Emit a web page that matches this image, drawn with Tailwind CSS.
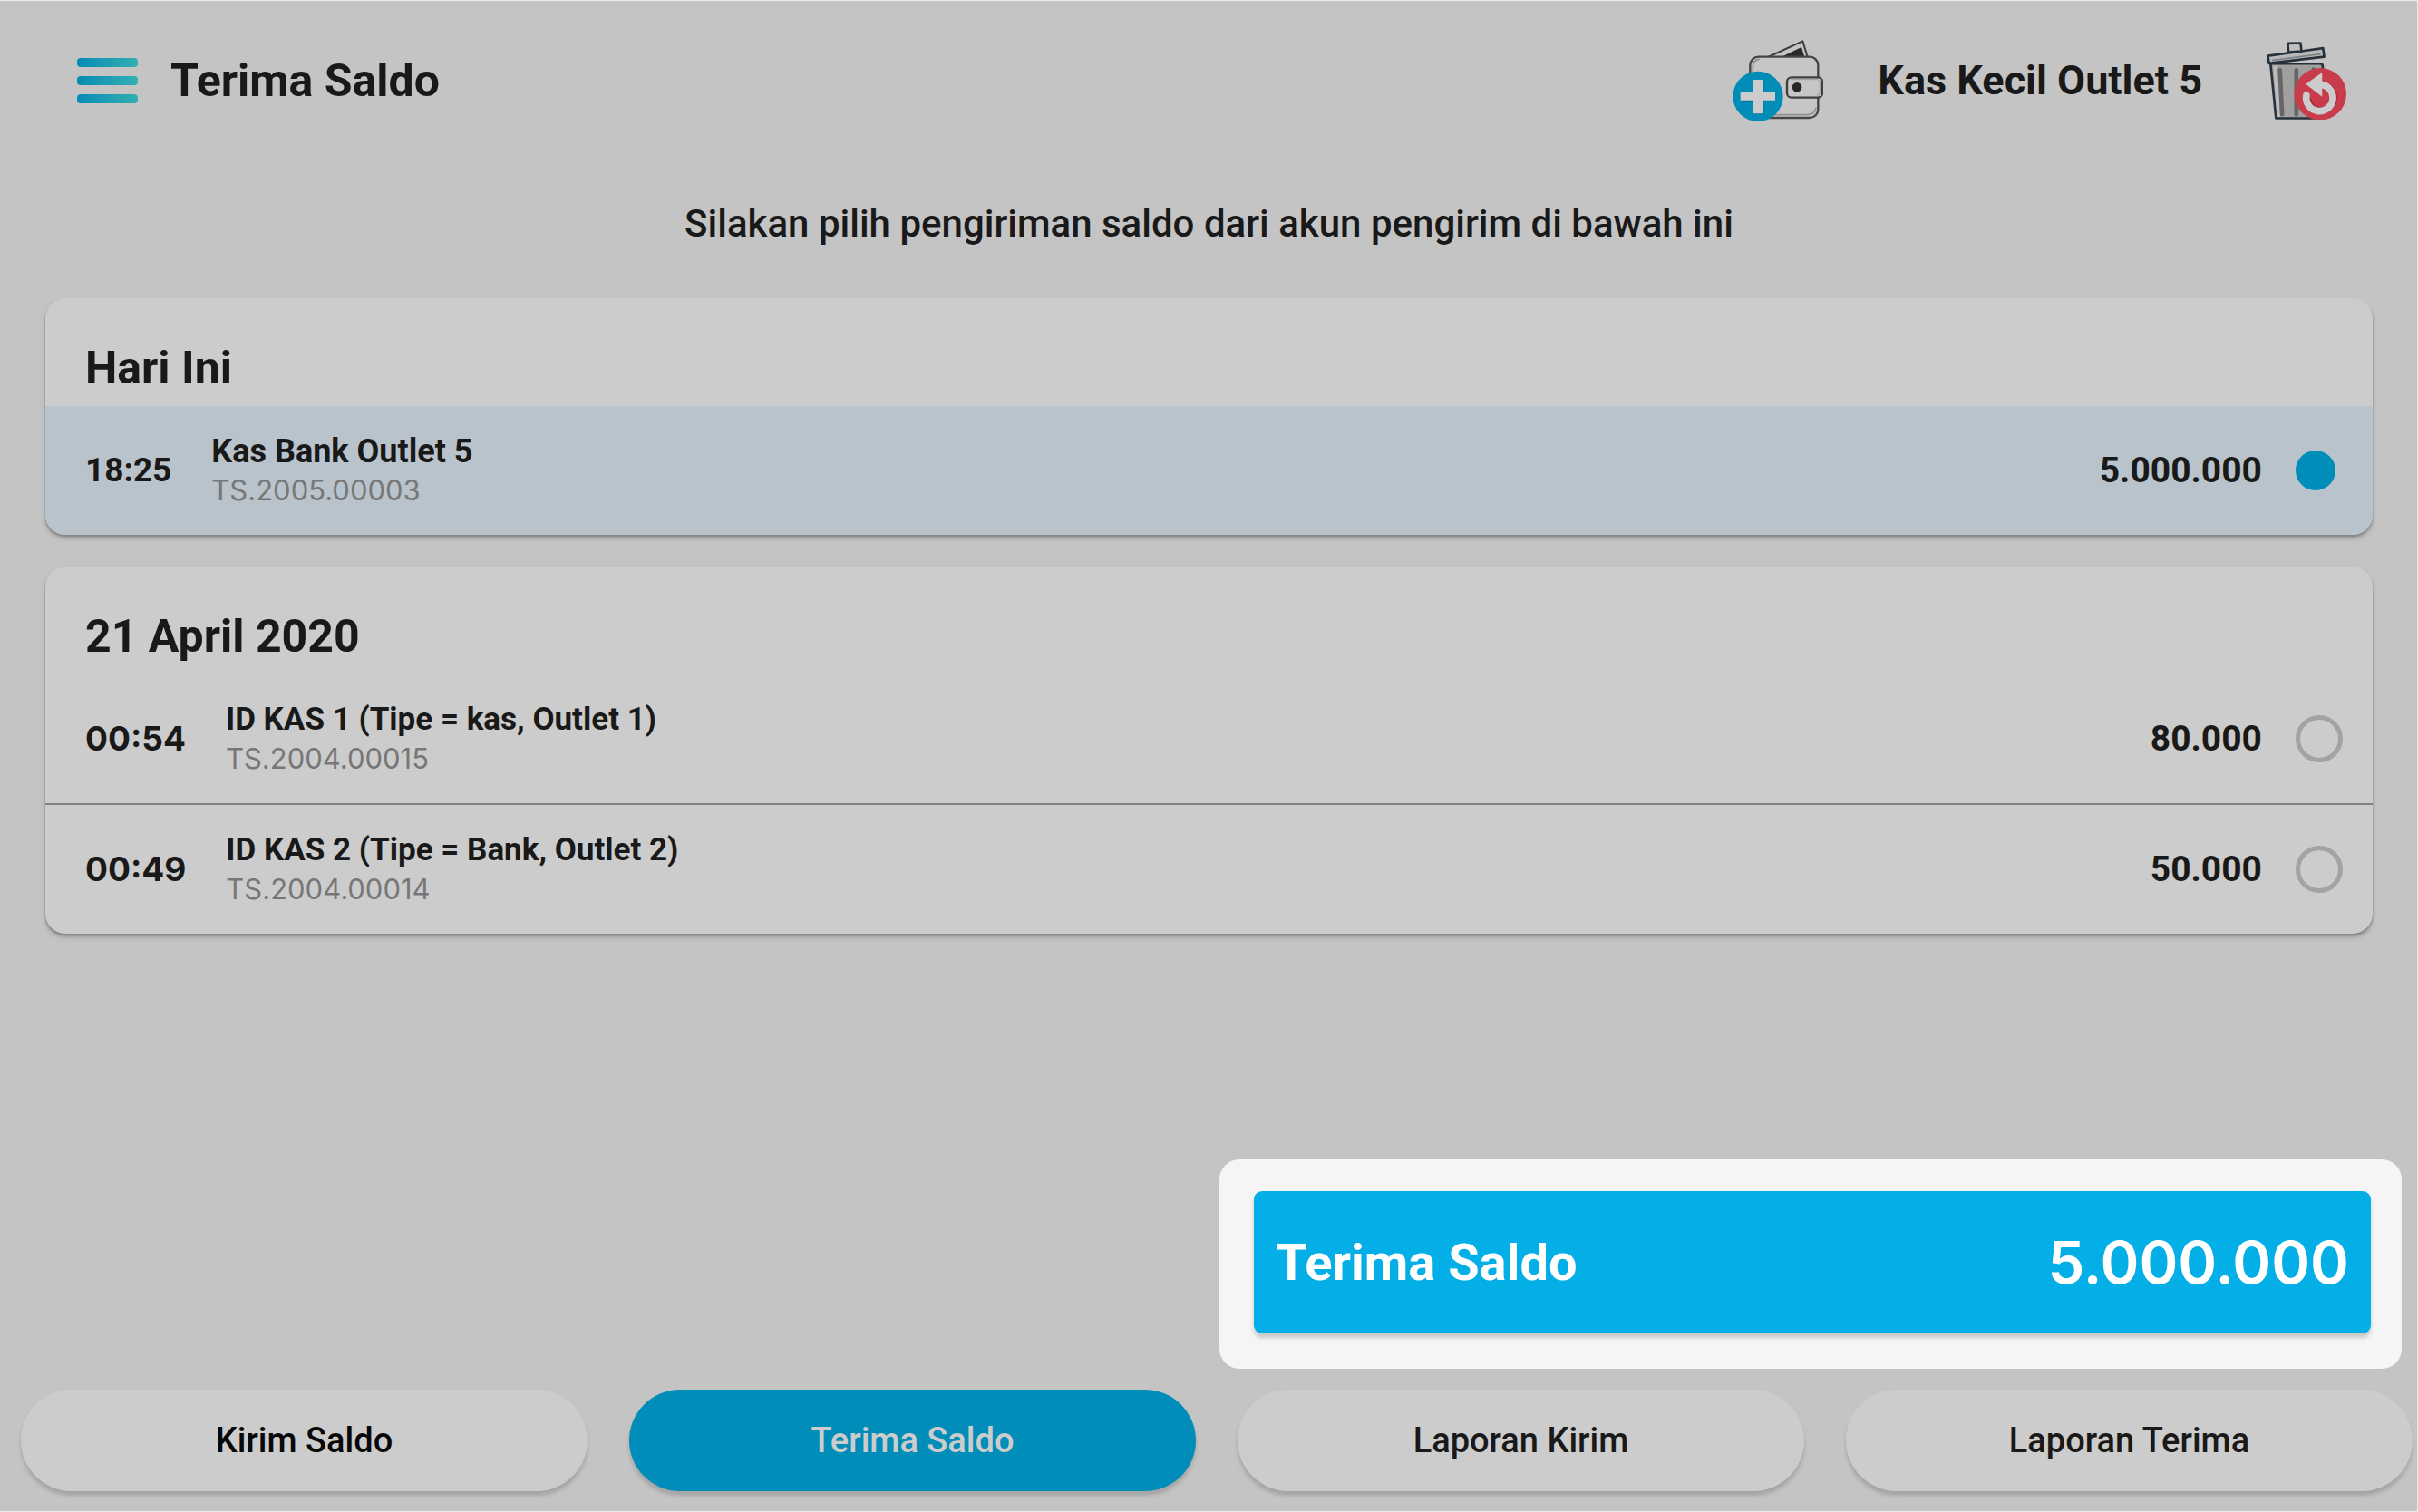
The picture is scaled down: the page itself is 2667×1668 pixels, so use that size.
<!DOCTYPE html>
<html lang="id">
<head>
  <meta charset="UTF-8" />
  <title>Terima Saldo</title>
  <meta name="viewport" content="width=device-width, initial-scale=1" />
  <script src="https://cdn.jsdelivr.net/npm/@tailwindcss/browser@4"></script>
</head>
<body class="min-h-screen flex flex-col bg-[#c4c4c4] border-y border-r border-[#ebebeb] font-['Roboto',sans-serif] text-[#191919]">

  <header class="flex items-center pl-[85px] pr-[78px] py-[43px]">
    <button aria-label="Menu" class="flex flex-col gap-[10px] mr-9">
      <span class="w-[67px] h-[10px] rounded bg-linear-to-r from-[#048bb3] to-[#32afb0]"></span>
      <span class="w-[67px] h-[10px] rounded bg-linear-to-r from-[#048bb3] to-[#32afb0]"></span>
      <span class="w-[67px] h-[10px] rounded bg-linear-to-r from-[#048bb3] to-[#32afb0]"></span>
    </button>
    <h1 class="text-[50px] leading-[60px] font-bold">Terima Saldo</h1>

    <button aria-label="Tambah kas" class="ml-auto mr-[60px]">
      <svg class="w-[100px] h-[90px]" viewBox="98 70 300 270" fill="none" stroke-linejoin="round">
        <path d="M215 127 330 74 346 127" stroke="#3c3c3c" stroke-width="6" />
        <path d="M258 127 326 94 336 127Z" fill="#2b2b2b" />
        <rect x="156" y="126" width="225" height="202" rx="28" fill="#c6c6c6" stroke="#454545" stroke-width="7" />
        <path d="M165 316V160q0-24 22-26M230 318h115q26-2 29-24" stroke="#8f8f8f" stroke-width="5" />
        <rect x="278" y="194" width="117" height="67" rx="15" fill="#c6c6c6" stroke="#3f3f3f" stroke-width="7" />
        <path d="M291 201h86q10 0 10 10v33q0 10-10 10" stroke="#999" stroke-width="3" />
        <circle cx="311" cy="227" r="16" fill="#262626" />
        <circle cx="182" cy="257" r="83" fill="#028db9" />
        <path d="M171 205h31v112h-31v-41h-42v-28h42z" fill="#0477a0" />
        <path d="M166 202h31v39h42v29h-42v44h-31v-44h-42v-29h42z" fill="#ccc" />
      </svg>
    </button>
    <p class="text-[45px] leading-[60px] font-bold">Kas Kecil Outlet 5</p>
    <button aria-label="Kosongkan" class="ml-[71px]">
      <svg class="w-[88px] h-[86px]" viewBox="90 77 263 256" fill="none" stroke="#26313b" stroke-width="8" stroke-linejoin="round">
        <path d="M103 149h166q7 2 6 12l-18 168H121z" fill="#a0a0a0" />
        <path d="M112 156h13l10 168h-11z" fill="#bdbdbd" stroke="none" />
        <path d="M134 170l7 146M188 170v146M245 168l-5 60" stroke="#666" stroke-width="14" stroke-linecap="round" />
        <path d="M94 123l182-25 4 28-182 22z" fill="#b9b9b9" />
        <path d="M108 138l160-21" stroke="#7d8388" stroke-width="5" />
        <path d="M162 111l-2-29 42-1 3 27z" fill="#c0c0c0" />
        <circle cx="267" cy="249" r="86" fill="#c93c4c" stroke="none" />
        <path d="M226 262a43 43 0 1 0 46-45" stroke="#a92c3c" stroke-width="22" />
        <path d="M221 254a44 44 0 1 0 51-36" stroke="#ccc" stroke-width="23" stroke-linecap="round" />
        <path d="M219 216 273 178V258z" fill="#ccc" stroke="none" />
      </svg>
    </button>
  </header>

  <main class="pl-[50px] pr-[49px] pt-[38px] pb-10">
    <p class="text-center text-[42px] leading-[64px] font-medium mb-[50px]">Silakan pilih pengiriman saldo dari akun pengirim di bawah ini</p>

    <div class="flex flex-col gap-[35px]">
      <section class="rounded-[22px] overflow-hidden bg-[#ccc] shadow-[0_2px_2px_#868686,0_4px_5px_#9c9c9c]">
        <h2 class="px-11 pt-[47px] pb-3 text-[50px] leading-[60px] font-bold">Hari Ini</h2>
        <label class="flex items-center pl-11 pr-[33px] py-7 bg-[#b8c3cc]">
          <span class="text-[37px] font-bold mr-11">18:25</span>
          <span class="flex-1">
            <span class="block text-[36px] leading-[44px] font-bold">Kas Bank Outlet 5</span>
            <span class="block font-['Inter',sans-serif] text-[31px] leading-[42px] text-[#777]">TS.2005.00003</span>
          </span>
          <span class="text-[39px] font-bold mr-[37px]">5.000.000</span>
          <span class="w-[52px] flex">
            <input type="radio" name="kiriman" checked class="appearance-none size-[52px] rounded-full border-[5px] border-[#a3a3a3] checked:size-11 checked:border-0 checked:bg-[#008db9]" />
          </span>
        </label>
      </section>

      <section class="rounded-[22px] overflow-hidden bg-[#ccc] shadow-[0_2px_2px_#868686,0_4px_5px_#9c9c9c]">
        <h2 class="px-11 pt-[47px] pb-3 text-[50px] leading-[60px] font-bold">21 April 2020</h2>
        <label class="flex items-center pl-11 pr-[33px] py-7 border-b-2 border-[#828282]">
          <span class="font-['Inter',sans-serif] text-[37px] font-bold mr-11">00:54</span>
          <span class="flex-1">
            <span class="block text-[35px] leading-[44px] font-bold">ID KAS 1 (Tipe = kas, Outlet 1)</span>
            <span class="block font-['Inter',sans-serif] text-[31px] leading-[42px] text-[#777]">TS.2004.00015</span>
          </span>
          <span class="text-[39px] font-bold mr-[37px]">80.000</span>
          <input type="radio" name="kiriman" class="appearance-none size-[52px] rounded-full border-[5px] border-[#a3a3a3]" />
        </label>
        <label class="flex items-center pl-11 pr-[33px] py-7">
          <span class="font-['Inter',sans-serif] text-[37px] font-bold mr-11">00:49</span>
          <span class="flex-1">
            <span class="block text-[35px] leading-[44px] font-bold">ID KAS 2 (Tipe = Bank, Outlet 2)</span>
            <span class="block font-['Inter',sans-serif] text-[31px] leading-[42px] text-[#777]">TS.2004.00014</span>
          </span>
          <span class="text-[39px] font-bold mr-[37px]">50.000</span>
          <input type="radio" name="kiriman" class="appearance-none size-[52px] rounded-full border-[5px] border-[#a3a3a3]" />
        </label>
      </section>
    </div>
  </main>

  <footer class="mt-auto">
    <div class="ml-auto mr-[17px] w-[1304px] max-w-full rounded-[22px] bg-[#f5f5f5] pt-[35px] pl-[38px] pr-[34px] pb-[39px]">
      <button class="w-full h-[157px] flex items-center justify-between px-6 rounded-[9px] bg-[#03afe6] text-white shadow-[0_5px_4px_#cacaca]">
        <span class="text-[56px] font-bold">Terima Saldo</span>
        <span class="font-['Inter',sans-serif] text-[65px] font-semibold">5.000.000</span>
      </button>
    </div>

    <nav class="grid grid-cols-4 gap-[46px] pl-[23px] pr-[5px] pt-[23px] pb-[22px] text-[38px] font-medium">
      <button class="h-28 rounded-full bg-[#ccc] text-[#080808] shadow-[0_5px_4px_#a5a5a5]">Kirim Saldo</button>
      <button class="h-28 rounded-full bg-[#008db9] text-[#ccc] shadow-[0_5px_4px_#a5a5a5]">Terima Saldo</button>
      <button class="h-28 rounded-full bg-[#ccc] shadow-[0_5px_4px_#a5a5a5]">Laporan Kirim</button>
      <button class="h-28 rounded-full bg-[#ccc] shadow-[0_5px_4px_#a5a5a5]">Laporan Terima</button>
    </nav>
  </footer>

</body>
</html>
